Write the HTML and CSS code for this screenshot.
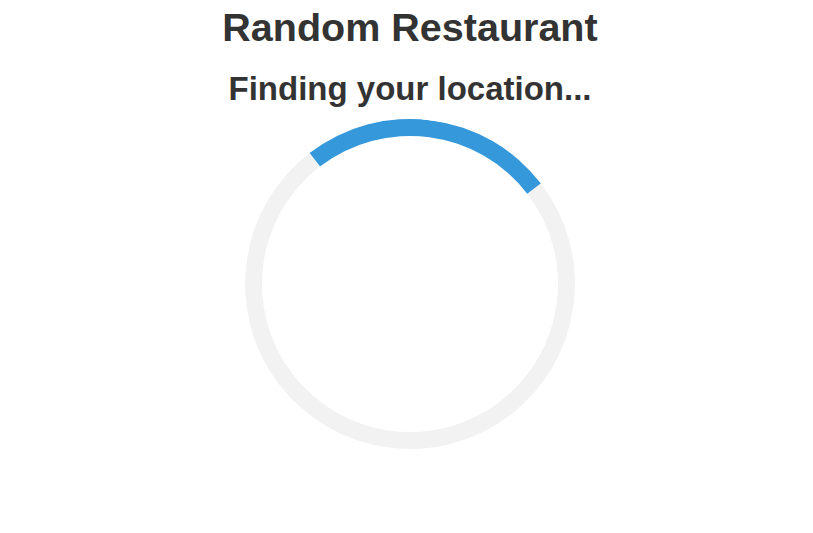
FILE: index.html
```html
<!DOCTYPE html>
<html lang="en">
<head>
<meta charset="utf-8">
<title>Random Restaurant</title>
<link rel="stylesheet" href="styles.css">
</head>
<body>
<main class="page">
  <h1 class="title">Random Restaurant</h1>
  <h2 class="status">Finding your location...</h2>
  <div class="loader" aria-label="Loading"></div>
</main>
</body>
</html>
```

FILE: styles.css
```css
html, body {
  margin: 0;
  padding: 0;
  background: #ffffff;
}

body {
  font-family: "Liberation Sans", Arial, sans-serif;
  color: #333333;
}

.page {
  display: flex;
  flex-direction: column;
  align-items: center;
  padding: 5px 0 0 7px;
  text-align: center;
}

.title {
  margin: 0;
  font-size: 39.5px;
  line-height: 44px;
  font-weight: bold;
}

.status {
  margin: 22px 0 0;
  font-size: 33px;
  line-height: 36px;
  font-weight: bold;
}

.loader {
  margin-top: 12px;
  width: 330px;
  height: 330px;
  box-sizing: border-box;
  border: 17px solid #f2f2f2;
  border-top-color: #3498db;
  border-radius: 50%;
  transform: rotate(7.5deg);
}
```
